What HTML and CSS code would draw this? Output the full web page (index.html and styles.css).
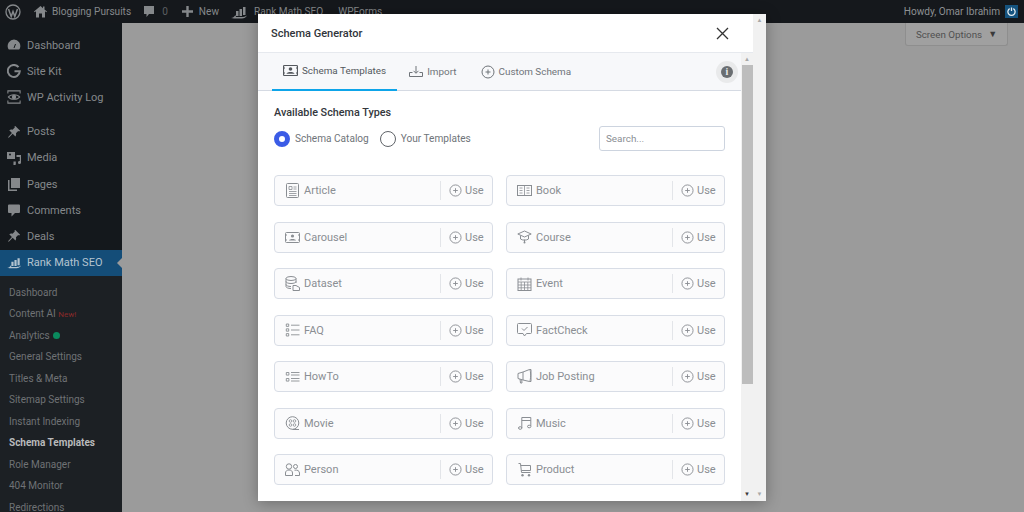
FILE: index.html
```html
<!DOCTYPE html>
<html lang="en">
<head>
    <meta charset="UTF-8">
    <title>Schema Generator</title>
    <link rel="stylesheet" href="styles.css">
</head>
<body>
    <svg class="defs" width="0" height="0">
        <symbol id="plus" viewBox="0 0 14 14"><circle cx="7" cy="7" r="6" fill="none" stroke="currentColor"/><path d="M7 4.5v5M4.500 7h5" stroke="currentColor" fill="none"/></symbol>
        <symbol id="pin" viewBox="0 0 16 16"><path d="M9.500 1l5.500 5.500-1.200.8-1-.5-2.600 2.600c.5 1.500.2 2.700-.6 3.600L6.500 9.900 2 14.500 1.200 14l4.400-5-3-3c1-.8 2.200-1 3.700-.6l2.600-2.600-.4-1z" fill="currentColor"/></symbol>
        <symbol id="rank" viewBox="0 0 16 16"><path d="M5 7h2.500v5H5zM8.500 5H11v7H8.500zM12 3h2.500v8H12z" fill="currentColor"/><path d="M0 14c2 0 3-1 4.500-3l.5 2h6c1.500 0 3 0 5-1.500-1 2-3 3-5 3H3z" fill="currentColor"/></symbol>
    </svg>

    <div class="admin-bar">
        <span class="bar-item logo">
            <svg width="16" height="16" viewBox="0 0 16 16"><circle cx="8" cy="8" r="7" fill="none" stroke="currentColor" stroke-width="1.300"/><path d="M3.500 5l2.700 7.500L8 7.500l1.800 5L12.500 5" fill="none" stroke="currentColor" stroke-width="1.500"/></svg>
        </span>
        <span class="bar-item home">
            <svg width="13" height="13" viewBox="0 0 13 13"><path d="M6.500 1L0 6.500l.7.8L2 6.300V12.500h3V8.500h3v4h3V6.300l1.300 1 .7-.8L10.500 4.500V1.500H9v1.700z" fill="currentColor"/></svg>
            Blogging Pursuits
        </span>
        <span class="bar-item comments">
            <svg width="12" height="13" viewBox="0 0 12 13"><path d="M1 1h10v8H6l-2.500 3V9H1z" fill="currentColor"/></svg>
            <span class="dim">0</span>
        </span>
        <span class="bar-item new">
            <svg width="11" height="11" viewBox="0 0 11 11"><path d="M4.300 0h2.400v4.300H11v2.400H6.700V11H4.300V6.700H0V4.300h4.300z" fill="currentColor"/></svg>
            New
        </span>
        <span class="bar-item rank">
            <svg width="16" height="16"><use href="#rank"/></svg>
            Rank Math SEO
        </span>
        <span class="bar-item">WPForms</span>
        <span class="howdy">
            Howdy, Omar Ibrahim
            <span class="avatar">
                <svg width="9" height="9" viewBox="0 0 10 10"><path d="M3 1.800a4 4 0 1 0 4 0M5 .5v4" fill="none" stroke="#e8eef2" stroke-width="1.400"/></svg>
            </span>
        </span>
    </div>

    <div class="wrap">
        <div class="sidebar">
            <ul class="menu">
                <li>
                    <svg width="14" height="14" viewBox="0 0 14 14"><path d="M7 1.500a6.500 6.500 0 0 0-6 8.500c.3 1 .8 1.500 1.500 1.500h9c.7 0 1.200-.5 1.500-1.500A6.500 6.500 0 0 0 7 1.500z" fill="currentColor"/><path d="M7 10l1.500-4" stroke="#14181c"/></svg>
                    Dashboard
                </li>
                <li>
                    <svg width="14" height="14" viewBox="0 0 14 14"><path d="M11.500 3.200A6 6 0 1 0 12.800 7.200H7.500" fill="none" stroke="currentColor" stroke-width="2"/></svg>
                    Site Kit
                </li>
                <li class="last-group">
                    <svg width="16" height="16" viewBox="0 0 16 16"><path d="M1 4V1h14v3M1 12v3h14v-3" fill="none" stroke="currentColor" stroke-width="1.200"/><path d="M1.500 8C4 4.500 12 4.500 14.500 8 12 11.500 4 11.500 1.500 8z" fill="none" stroke="currentColor" stroke-width="1.300"/><circle cx="8" cy="8" r="2.500" fill="currentColor"/></svg>
                    WP Activity Log
                </li>
                <li><svg width="14" height="14"><use href="#pin"/></svg>Posts</li>
                <li>
                    <svg width="14" height="14" viewBox="0 0 14 14"><path d="M0 1h8v7H0z" fill="currentColor"/><circle cx="3" cy="3.500" r="1" fill="#14181c"/><path d="M9.500 4H14v7.500a1.500 1.500 0 1 1-1.200-1.400V6H9.500zM6.500 10.500h2.300V13a1.200 1.200 0 1 1-2.300-.5z" fill="currentColor"/></svg>
                    Media
                </li>
                <li>
                    <svg width="14" height="14" viewBox="0 0 14 14"><path d="M4 1h9v10H4z" fill="currentColor"/><path d="M2.500 3v9.500H10V14H1V3z" fill="currentColor"/></svg>
                    Pages
                </li>
                <li>
                    <svg width="14" height="14" viewBox="0 0 14 14"><path d="M2 1.500h10a1 1 0 0 1 1 1v6.500a1 1 0 0 1-1 1H8l-3.500 3.500V10H2a1 1 0 0 1-1-1V2.500a1 1 0 0 1 1-1z" fill="currentColor"/></svg>
                    Comments
                </li>
                <li><svg width="14" height="14"><use href="#pin"/></svg>Deals</li>
                <li class="current"><svg width="15" height="15"><use href="#rank"/></svg>Rank Math SEO</li>
            </ul>
            <ul class="submenu">
                <li>Dashboard</li>
                <li>Content AI <span class="new-tag">New!</span></li>
                <li>Analytics <span class="green-dot"></span></li>
                <li>General Settings</li>
                <li>Titles &amp; Meta</li>
                <li>Sitemap Settings</li>
                <li>Instant Indexing</li>
                <li class="active">Schema Templates</li>
                <li>Role Manager</li>
                <li>404 Monitor</li>
                <li>Redirections</li>
            </ul>
        </div>
        <div class="content">
            <div class="screen-options">Screen Options <span class="arrow">&#9660;</span></div>
        </div>
    </div>

    <div class="modal">
        <div class="modal-main">
            <div class="modal-header">
                <h2>Schema Generator</h2>
                <svg class="close" width="13" height="13" viewBox="0 0 13 13"><path d="M1 1l11 11M12 1L1 12" stroke="#333" stroke-width="1.300" fill="none"/></svg>
            </div>
            <div class="modal-body">
                <div class="panel">
                    <div class="tabs">
                        <div class="tab active">
                            <svg width="15" height="13" viewBox="0 0 15 13"><rect x=".5" y="1.500" width="14" height="10" rx="1" fill="none" stroke="currentColor" stroke-width="1.200"/><circle cx="7.500" cy="5" r="1.800" fill="currentColor"/><path d="M3.500 9.800c.5-2.400 7.500-2.400 8 0z" fill="currentColor"/><path d="M.5 4h1.500M13 4h1.500M.5 9h1.500M13 9h1.500" stroke="currentColor"/></svg>
                            Schema Templates
                        </div>
                        <div class="tab">
                            <svg width="14" height="13" viewBox="0 0 14 13"><path d="M7 1v7M4.500 5.800L7 8.300l2.500-2.500M3.500 7.500H.5v4h13v-4h-3" fill="none" stroke="currentColor"/></svg>
                            Import
                        </div>
                        <div class="tab">
                            <svg width="14" height="14"><use href="#plus"/></svg>
                            Custom Schema
                        </div>
                        <span class="info"><span class="info-dot">i</span></span>
                    </div>
                    <div class="panel-inner">
                        <h3>Available Schema Types</h3>
                        <div class="filters">
                            <label class="radio checked">Schema Catalog</label>
                            <label class="radio">Your Templates</label>
                            <input class="search" type="text" placeholder="Search...">
                        </div>
                        <div class="cards">
                            <div class="card">
                                <svg class="card-icon" width="14" height="15" viewBox="0 0 14 15"><rect x="1" y=".5" width="12" height="14" rx="1" fill="none" stroke="currentColor"/><path d="M3.500 3.500h3v3h-3zM8 4h3M8 6h3M3.500 8.500h7.500M3.500 10.500h7.500M3.500 12.500h7.500" fill="none" stroke="currentColor" stroke-width=".8"/></svg>
                                <span class="card-name">Article</span>
                                <span class="use"><svg width="13" height="13"><use href="#plus"/></svg>Use</span>
                            </div>
                            <div class="card">
                                <svg class="card-icon" width="15" height="13" viewBox="0 0 15 13"><rect x=".5" y="1.500" width="14" height="10" fill="none" stroke="currentColor"/><path d="M7.500 1.500v10M2.500 4h3M2.500 6.500h3M2.500 9h3M9.500 4h3M9.500 6.500h3M9.500 9h3" fill="none" stroke="currentColor" stroke-width=".8"/></svg>
                                <span class="card-name">Book</span>
                                <span class="use"><svg width="13" height="13"><use href="#plus"/></svg>Use</span>
                            </div>
                            <div class="card">
                                <svg class="card-icon" width="15" height="13" viewBox="0 0 15 13"><rect x=".5" y="1.500" width="14" height="10" rx="1" fill="none" stroke="currentColor"/><circle cx="7.500" cy="5" r="1.600" fill="currentColor"/><path d="M4 9.500c.5-2 6.500-2 7 0z" fill="currentColor"/><path d="M.5 4h1.500M13 4h1.500M.5 9h1.500M13 9h1.500" stroke="currentColor"/></svg>
                                <span class="card-name">Carousel</span>
                                <span class="use"><svg width="13" height="13"><use href="#plus"/></svg>Use</span>
                            </div>
                            <div class="card">
                                <svg class="card-icon" width="15" height="14" viewBox="0 0 15 14"><path d="M7.500 1L.8 4l6.700 3 6.700-3zM3.500 5.500v3.500c2 1.500 6 1.500 8 0V5.500M7.500 9.500v3" fill="none" stroke="currentColor"/><circle cx="7.500" cy="12.500" r="1" fill="currentColor"/></svg>
                                <span class="card-name">Course</span>
                                <span class="use"><svg width="13" height="13"><use href="#plus"/></svg>Use</span>
                            </div>
                            <div class="card">
                                <svg class="card-icon" width="15" height="15" viewBox="0 0 15 15"><ellipse cx="6" cy="2.500" rx="5" ry="2" fill="none" stroke="currentColor"/><path d="M1 2.500v8c0 1 2 2 5 2M1 5.500c0 1 2 2 5 2s5-1 5-2M1 8.500c0 1 2 2 5 2M11 2.500V7" fill="none" stroke="currentColor"/><path d="M8 9.500h3l3.500 2v3H8z" fill="#fbfbfc" stroke="currentColor"/></svg>
                                <span class="card-name">Dataset</span>
                                <span class="use"><svg width="13" height="13"><use href="#plus"/></svg>Use</span>
                            </div>
                            <div class="card">
                                <svg class="card-icon" width="14" height="14" viewBox="0 0 14 14"><rect x=".5" y="2" width="13" height="11.500" fill="none" stroke="currentColor"/><path d="M3.500 .5v3M10.500 .5v3M.5 5h13M.5 8h13M.5 10.800h13M3.700 5v8.500M7 5v8.500M10.300 5v8.500" fill="none" stroke="currentColor" stroke-width=".8"/></svg>
                                <span class="card-name">Event</span>
                                <span class="use"><svg width="13" height="13"><use href="#plus"/></svg>Use</span>
                            </div>
                            <div class="card">
                                <svg class="card-icon" width="14" height="14" viewBox="0 0 14 14"><path d="M.8 1h2.400v2.400H.8zM.8 5.800h2.400v2.400H.8zM.8 10.600h2.400V13H.8zM5.500 2.200H14M5.500 7H14M5.500 11.800H14" fill="none" stroke="currentColor" stroke-width=".9"/></svg>
                                <span class="card-name">FAQ</span>
                                <span class="use"><svg width="13" height="13"><use href="#plus"/></svg>Use</span>
                            </div>
                            <div class="card">
                                <svg class="card-icon" width="15" height="14" viewBox="0 0 15 14"><path d="M1.500.5h12a1 1 0 0 1 1 1v8a1 1 0 0 1-1 1h-4L7.500 13l-1.500-2.500H1.500a1 1 0 0 1-1-1v-8a1 1 0 0 1 1-1z" fill="none" stroke="currentColor"/><path d="M5 5.500l2 2 3.500-3.500" fill="none" stroke="currentColor"/></svg>
                                <span class="card-name">FactCheck</span>
                                <span class="use"><svg width="13" height="13"><use href="#plus"/></svg>Use</span>
                            </div>
                            <div class="card">
                                <svg class="card-icon" width="14" height="12" viewBox="0 0 14 12"><path d="M.8 1.500h2.600v2.600H.8zM.8 7.500h2.600v2.600H.8zM5.500 1.500H14M5.500 4H14M5.500 7.500H14M5.500 10H14" fill="none" stroke="currentColor" stroke-width=".9"/></svg>
                                <span class="card-name">HowTo</span>
                                <span class="use"><svg width="13" height="13"><use href="#plus"/></svg>Use</span>
                            </div>
                            <div class="card">
                                <svg class="card-icon" width="14" height="15" viewBox="0 0 14 15"><path d="M.5 4.500L5.500 3V11L.5 9.500zM5.500 3L12 .5c1.500 0 1.500 11 0 12L5.500 11M2.500 10l.5 4h1.500l-.3-3.500" fill="none" stroke="currentColor"/><path d="M12 .5h1.500v12H12" fill="none" stroke="currentColor"/></svg>
                                <span class="card-name">Job Posting</span>
                                <span class="use"><svg width="13" height="13"><use href="#plus"/></svg>Use</span>
                            </div>
                            <div class="card">
                                <svg class="card-icon" width="14" height="15" viewBox="0 0 14 15"><circle cx="7" cy="7" r="6.300" fill="none" stroke="currentColor"/><circle cx="5" cy="5" r="1.300" fill="none" stroke="currentColor" stroke-width=".8"/><circle cx="9" cy="5" r="1.300" fill="none" stroke="currentColor" stroke-width=".8"/><circle cx="5" cy="9" r="1.300" fill="none" stroke="currentColor" stroke-width=".8"/><circle cx="9" cy="9" r="1.300" fill="none" stroke="currentColor" stroke-width=".8"/><path d="M7 13.500h6.500" stroke="currentColor"/></svg>
                                <span class="card-name">Movie</span>
                                <span class="use"><svg width="13" height="13"><use href="#plus"/></svg>Use</span>
                            </div>
                            <div class="card">
                                <svg class="card-icon" width="14" height="14" viewBox="0 0 14 14"><path d="M4.300 12V1.500h9V10M4.300 4.500h9" fill="none" stroke="currentColor"/><ellipse cx="2.700" cy="12" rx="1.700" ry="1.300" fill="none" stroke="currentColor"/><ellipse cx="11.700" cy="10.500" rx="1.700" ry="1.300" fill="none" stroke="currentColor"/></svg>
                                <span class="card-name">Music</span>
                                <span class="use"><svg width="13" height="13"><use href="#plus"/></svg>Use</span>
                            </div>
                            <div class="card">
                                <svg class="card-icon" width="15" height="13" viewBox="0 0 15 13"><circle cx="4" cy="3.500" r="2.700" fill="none" stroke="currentColor"/><path d="M.5 12.500V10c0-2 1.500-3 3.500-3s3.500 1 3.500 3v2.500zM10.500 1.500a2 2 0 1 1 0 4 2 2 0 0 1 0-4zM9.500 7.200c2.500-.5 5 .5 5 2.800v2.500H10" fill="none" stroke="currentColor"/></svg>
                                <span class="card-name">Person</span>
                                <span class="use"><svg width="13" height="13"><use href="#plus"/></svg>Use</span>
                            </div>
                            <div class="card">
                                <svg class="card-icon" width="14" height="14" viewBox="0 0 14 14"><path d="M1 .5h2l1 9h9M3.200 2.500H13v5H3.900" fill="none" stroke="currentColor"/><circle cx="5" cy="12.300" r="1.200" fill="currentColor"/><circle cx="11.500" cy="12.300" r="1.200" fill="currentColor"/></svg>
                                <span class="card-name">Product</span>
                                <span class="use"><svg width="13" height="13"><use href="#plus"/></svg>Use</span>
                            </div>
                        </div>
                    </div>
                </div>
                <div class="scrollbar">
                    <span class="sb-arrow">&#9650;</span>
                    <span class="sb-thumb"></span>
                    <span class="sb-arrow sb-bottom">&#9660;</span>
                </div>
            </div>
        </div>
        <div class="scrollbar outer">
            <span class="sb-arrow">&#9650;</span>
            <span class="sb-arrow sb-bottom">&#9660;</span>
        </div>
    </div>
</body>
</html>
```

FILE: styles.css
```css
html, body {
    height: 100%;
    margin: 0;
    overflow: hidden;
}
body {
    font-family: 'Roboto', 'Open Sans', sans-serif;
    background-color: #9b9b9b;
    display: flex;
    flex-direction: column;
}
ul {
    list-style: none;
    margin: 0;
    padding: 0;
}
.defs {
    position: absolute;
}

/* admin bar */
.admin-bar {
    height: 23px;
    flex: none;
    background-color: #15181c;
    color: #85888b;
    font-size: 10.1px;
    display: flex;
    align-items: center;
    padding-left: 5px;
}
.bar-item {
    display: flex;
    align-items: center;
    gap: 5px;
    white-space: nowrap;
}
.logo {
    margin-right: 13px;
}
.home {
    margin-right: 12px;
}
.comments {
    gap: 7px;
    margin-right: 14px;
}
.new {
    gap: 6px;
    margin-right: 12px;
}
.rank {
    gap: 7px;
    margin-right: 15px;
}
.dim {
    color: #5c5f62;
}
.howdy {
    margin-left: auto;
    margin-right: 6px;
    display: flex;
    align-items: center;
    gap: 5px;
    color: #8d9093;
}
.avatar {
    width: 13px;
    height: 13px;
    background-color: #15537f;
    display: flex;
    align-items: center;
    justify-content: center;
}

/* sidebar */
.wrap {
    flex: 1;
    display: flex;
    min-height: 0;
}
.sidebar {
    width: 122px;
    flex: none;
    background-color: #14181c;
}
.menu {
    padding-top: 9px;
}
.menu li {
    height: 26.2px;
    display: flex;
    align-items: center;
    gap: 6px;
    padding-left: 7px;
    font-size: 11px;
    color: #85888b;
}
.menu svg {
    width: 14px;
    flex: none;
}
.menu .last-group {
    margin-bottom: 8px;
}
.menu .current {
    background-color: #144d78;
    color: #b4c4d0;
    position: relative;
}
.current::after {
    content: "";
    position: absolute;
    right: 0;
    top: 8px;
    border: 5px solid transparent;
    border-right-color: #9b9b9b;
    border-left-width: 0;
}
.submenu {
    background-color: #1c2024;
    padding-top: 6px;
    height: 240px;
}
.submenu li {
    height: 21.5px;
    line-height: 21.5px;
    padding-left: 9px;
    font-size: 10px;
    color: #6f7275;
    white-space: nowrap;
}
.submenu .active {
    color: #b9babb;
    font-weight: 700;
}
.new-tag {
    color: #8a2a2a;
    font-size: 8px;
}
.green-dot {
    display: inline-block;
    width: 7px;
    height: 7px;
    margin-left: 1px;
    border-radius: 50%;
    background-color: #0a8a5e;
}

/* page behind the modal */
.content {
    flex: 1;
    display: flex;
    justify-content: flex-end;
    align-items: flex-start;
    padding-right: 16px;
}
.screen-options {
    height: 23px;
    width: 103px;
    box-sizing: border-box;
    display: flex;
    align-items: center;
    justify-content: center;
    gap: 6px;
    font-size: 9.8px;
    color: #505050;
    background-color: #a0a0a0;
    border: 1px solid #8e8e8e;
    border-top: none;
    border-radius: 0 0 3px 3px;
}
.arrow {
    font-size: 9px;
    color: #3a3a3a;
}

/* modal */
.modal {
    position: absolute;
    left: 258px;
    top: 14px;
    width: 508px;
    height: 487px;
    display: flex;
    background-color: #fff;
    box-shadow: 0 2px 14px rgba(0, 0, 0, 0.3);
}
.modal-main {
    flex: 1;
    min-width: 0;
    display: flex;
    flex-direction: column;
}
.modal-header {
    height: 38px;
    flex: none;
    display: flex;
    align-items: center;
    justify-content: space-between;
    padding: 0 24px 0 13px;
    border-bottom: 1px solid #e6e9ee;
}
.modal-header h2 {
    margin: 0;
    font-size: 11px;
    font-weight: 500;
    color: #30343a;
}
.modal-body {
    flex: 1;
    min-height: 0;
    display: flex;
}
.panel {
    flex: 1;
    min-width: 0;
}

/* tabs */
.tabs {
    height: 38px;
    box-sizing: border-box;
    display: flex;
    align-items: center;
    padding-left: 14px;
    background-color: #f7f8fa;
    border-bottom: 1px solid #d5dae3;
    position: relative;
}
.tab {
    height: 38px;
    box-sizing: border-box;
    display: flex;
    align-items: center;
    gap: 4px;
    padding: 0 12px;
    font-size: 9.9px;
    color: #6f7479;
    white-space: nowrap;
}
.tab.active {
    padding: 0 11px;
    color: #54585d;
    border-bottom: 2px solid #0ea5e9;
}
.info {
    position: absolute;
    right: 3px;
    top: 8px;
    width: 22px;
    height: 22px;
    border-radius: 50%;
    background-color: #e9eaeb;
    display: flex;
    align-items: center;
    justify-content: center;
}
.info-dot {
    width: 12px;
    height: 12px;
    border-radius: 50%;
    background-color: #6a6e72;
    color: #e9eaeb;
    font: 700 10px/12px 'Liberation Serif', serif;
    text-align: center;
}

/* body of the panel */
.panel-inner {
    padding: 14px 16px 0 16px;
}
h3 {
    margin: 0;
    font-size: 10.8px;
    line-height: 16px;
    font-weight: 500;
    color: #33373c;
}
.filters {
    display: flex;
    align-items: center;
    margin-top: 5px;
}
.radio {
    display: flex;
    align-items: center;
    gap: 5px;
    margin-right: 11px;
    font-size: 10.1px;
    color: #6f7479;
}
.radio::before {
    content: "";
    width: 16px;
    height: 16px;
    box-sizing: border-box;
    border-radius: 50%;
    border: 1px solid #5f6368;
    background-color: #fff;
}
.radio.checked::before {
    border: 5px solid #3b5ce6;
}
.search {
    margin-left: auto;
    width: 126px;
    height: 25px;
    box-sizing: border-box;
    padding: 0 6px;
    font-family: inherit;
    font-size: 9.9px;
    border: 1px solid #cdd4df;
    border-radius: 3px;
    outline: none;
}
.search::placeholder {
    color: #8a8e93;
}

/* schema cards */
.cards {
    display: grid;
    grid-template-columns: 219px 219px;
    column-gap: 13px;
    row-gap: 15.5px;
    margin-top: 24px;
}
.card {
    height: 31px;
    box-sizing: border-box;
    display: flex;
    align-items: center;
    padding-left: 10px;
    background-color: #fbfbfc;
    border: 1px solid #d8dde6;
    border-radius: 4px;
    color: #8a8e93;
}
.card-icon {
    width: 15px;
    flex: none;
}
.card-name {
    margin-left: 4px;
    font-size: 11px;
}
.use {
    margin-left: auto;
    width: 52px;
    box-sizing: border-box;
    display: flex;
    align-items: center;
    gap: 3px;
    padding-left: 8px;
    height: 19px;
    border-left: 1px solid #e3e5e9;
    font-size: 11px;
}

/* scrollbars */
.scrollbar {
    width: 12px;
    flex: none;
    background-color: #f1f1f1;
    display: flex;
    flex-direction: column;
    align-items: center;
    position: relative;
}
.scrollbar.outer {
    width: 13px;
}
.sb-arrow {
    height: 12px;
    line-height: 12px;
    font-size: 6px;
    color: #a8a8a8;
}
.sb-thumb {
    width: 11px;
    height: 319px;
    background-color: #bdbdbd;
}
.sb-bottom {
    position: absolute;
    bottom: 1px;
    color: #3a3a3a;
}
.outer .sb-bottom {
    color: #a8a8a8;
}
```
